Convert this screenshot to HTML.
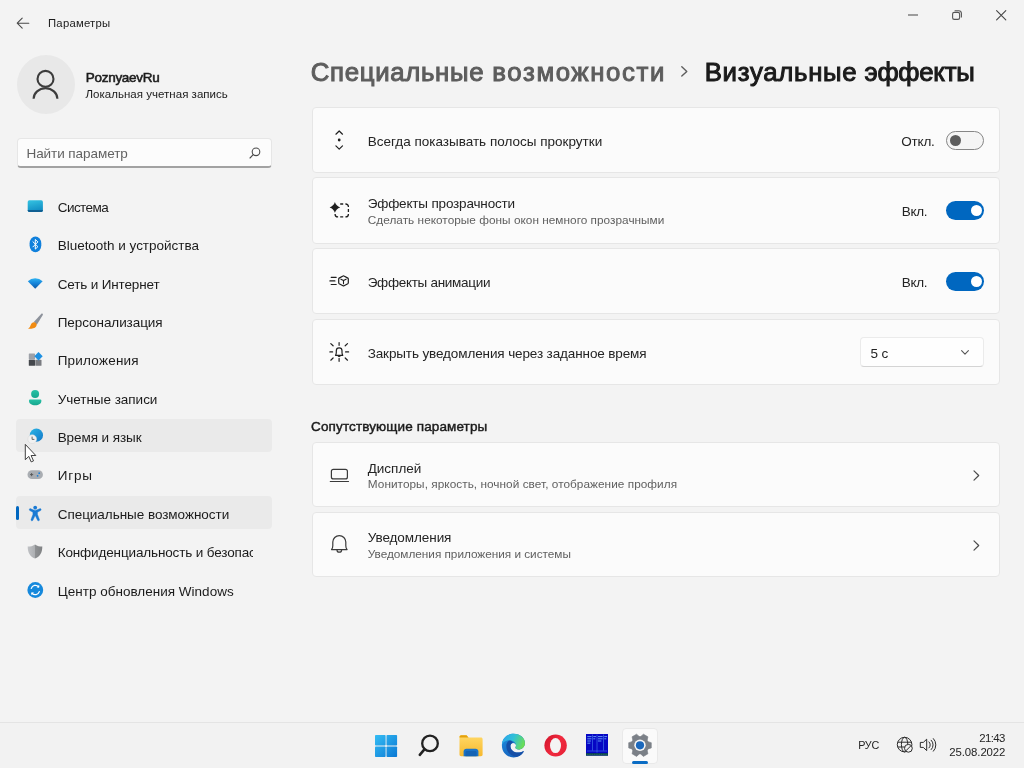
<!DOCTYPE html>
<html lang="ru">
<head>
<meta charset="utf-8">
<title>Параметры — Визуальные эффекты</title>
<style>
*{box-sizing:border-box;margin:0;padding:0}
html,body{width:1024px;height:768px;overflow:hidden}
body{position:relative;background:#f3f3f3;font-family:"Liberation Sans",sans-serif;color:#1b1b1b}
.t{position:absolute;white-space:nowrap;line-height:1;display:block}
.abs{position:absolute}
svg{position:absolute;overflow:visible}
h1,h2{font-weight:400;font-size:inherit}
#app{position:absolute;left:0;top:0;width:1024px;height:768px;will-change:transform}
.card{position:absolute;left:312px;width:688px;background:#fbfbfb;border:1px solid #e6e6e6;border-radius:4px}
.navsel{position:absolute;left:16px;width:256px;height:33px;border-radius:4px;background:#eaeaea}
.tog{position:absolute;left:946px;width:38px;height:19px;border-radius:10px}
.tog.off{border:1px solid #868686;background:#f5f5f5}
.tog.on{background:#0067c0}
.tog i{position:absolute;top:50%;width:11px;height:11px;margin-top:-5.5px;border-radius:50%}
.tog.off i{left:2.500px;background:#5d5d5d}
.tog.on i{right:2.500px;background:#fff}
</style>
</head>
<body>
<div id="app">

<!-- title bar -->
<header>
<svg style="left:16px;top:17px" width="14" height="12" viewBox="0 0 14 12" fill="none" stroke="#4a4a4a" stroke-width="1.1" stroke-linecap="round" stroke-linejoin="round"><path d="M12.8 6.2H1.4M6.2 1.2L1.2 6.2l5 5"/></svg>
<span class="t" id="ttl" style="left:48.0px;top:18px;font-size:11.3px;color:#1b1b1b;letter-spacing:0.246px;">Параметры</span>
<svg style="left:908px;top:14px" width="10" height="2" viewBox="0 0 10 2"><path d="M0 1h10" stroke="#555" stroke-width="1.1"/></svg>
<svg style="left:952px;top:10px" width="10" height="10" viewBox="0 0 10 10" fill="none" stroke="#555" stroke-width="1.100"><rect x="0.600" y="2.400" width="7" height="7" rx="1.700"/><path d="M2.600 0.700h4a2.800 2.800 0 0 1 2.800 2.800v4"/></svg>
<svg style="left:996px;top:10px" width="10" height="10" viewBox="0 0 10 10" stroke="#444" stroke-width="1.100" stroke-linecap="round"><path d="M0.600 0.600l9.200 9.200M9.800 0.600L0.600 9.800"/></svg>
</header>

<!-- sidebar -->
<aside>
<div class="abs" style="left:17px;top:55px;width:58px;height:59px;border-radius:50%;background:#e8e8e8"></div>
<svg style="left:0;top:0" width="90" height="120" viewBox="0 0 90 120" fill="none" stroke="#3c3c3c" stroke-width="2.100"><circle cx="45.500" cy="78.900" r="8"/><path d="M33.600 98.800a11.900 10.500 0 0 1 23.800 0"/></svg>
<span class="t" id="uname" style="left:85.8px;top:71px;font-size:13.5px;color:#1b1b1b;-webkit-text-stroke:0.55px #1b1b1b;letter-spacing:-0.295px;">PoznyaevRu</span>
<span class="t" id="usub" style="left:85.5px;top:89px;font-size:11.5px;color:#1b1b1b;letter-spacing:0.024px;">Локальная учетная запись</span>
<div class="abs" style="left:17px;top:138px;width:255px;height:30px;background:#fcfcfc;border:1px solid #e6e6e6;border-bottom:2px solid #a2a2a2;border-radius:4px"></div>
<span class="t" id="srch" style="left:26.5px;top:147px;font-size:13.5px;color:#626262;letter-spacing:-0.067px;">Найти параметр</span>
<svg style="left:249px;top:147px" width="12" height="12" viewBox="0 0 12 12" fill="none" stroke="#4a4a4a" stroke-width="1.1" stroke-linecap="round"><circle cx="7" cy="4.8" r="3.8"/><path d="M4.200 7.700L1 11"/></svg>

<nav>
<div class="navsel" style="top:419px;background:#eaeaea"></div>
<div class="navsel" style="top:496px;background:#eaeaea"></div>
<div class="abs" style="left:16px;top:506px;width:3px;height:14px;border-radius:2px;background:#0067c0"></div>
<span class="t" id="nav0" style="left:57.7px;top:201px;font-size:13.5px;color:#1b1b1b;letter-spacing:-0.547px;">Система</span><span class="t" id="nav1" style="left:57.7px;top:239px;font-size:13.5px;color:#1b1b1b;letter-spacing:-0.018px;">Bluetooth и устройства</span><span class="t" id="nav2" style="left:57.7px;top:278px;font-size:13.5px;color:#1b1b1b;letter-spacing:-0.150px;">Сеть и Интернет</span><span class="t" id="nav3" style="left:57.7px;top:316px;font-size:13.5px;color:#1b1b1b;letter-spacing:-0.065px;">Персонализация</span><span class="t" id="nav4" style="left:57.7px;top:354px;font-size:13.5px;color:#1b1b1b;letter-spacing:0.218px;">Приложения</span><span class="t" id="nav5" style="left:57.7px;top:393px;font-size:13.5px;color:#1b1b1b;letter-spacing:-0.031px;">Учетные записи</span><span class="t" id="nav6" style="left:57.7px;top:431px;font-size:13.5px;color:#1b1b1b;letter-spacing:-0.076px;">Время и язык</span><span class="t" id="nav7" style="left:57.7px;top:469px;font-size:13.5px;color:#1b1b1b;letter-spacing:0.850px;">Игры</span><span class="t" id="nav8" style="left:57.7px;top:508px;font-size:13.5px;color:#1b1b1b;letter-spacing:-0.039px;">Специальные возможности</span><span class="t" id="nav9" style="left:57.7px;top:546px;font-size:13.5px;color:#1b1b1b;letter-spacing:-0.140px;width:195.6px;overflow:hidden;height:18px;">Конфиденциальность и безопасность</span><span class="t" id="nav10" style="left:57.7px;top:585px;font-size:13.5px;color:#1b1b1b;letter-spacing:0.014px;">Центр обновления Windows</span>
<svg style="left:0;top:0" width="60" height="620" viewBox="0 0 60 620">
<defs>
<linearGradient id="gsys" x1="0" y1="0" x2="0.3" y2="1"><stop offset="0" stop-color="#35c4e2"/><stop offset="1" stop-color="#128ec4"/></linearGradient>
<linearGradient id="gwifi" x1="0" y1="0" x2="0" y2="1"><stop offset="0" stop-color="#2fb4f2"/><stop offset="0.45" stop-color="#1787dc"/><stop offset="1" stop-color="#0c58a6"/></linearGradient>
<linearGradient id="gacc" x1="0" y1="0" x2="0" y2="1"><stop offset="0" stop-color="#27c2a6"/><stop offset="1" stop-color="#17a68e"/></linearGradient>
<linearGradient id="gshield" x1="0" y1="0" x2="1" y2="0"><stop offset="0" stop-color="#c0c2c5"/><stop offset="0.5" stop-color="#acaeb1"/><stop offset="0.5" stop-color="#8f9193"/><stop offset="1" stop-color="#808284"/></linearGradient>
<linearGradient id="gglobe" x1="0" y1="0" x2="1" y2="1"><stop offset="0" stop-color="#2bb6e6"/><stop offset="1" stop-color="#1277c8"/></linearGradient>
</defs>
<!-- system -->
<rect x="27.7" y="200.300" width="15.2" height="11.6" rx="1.6" fill="url(#gsys)"/>
<path d="M27.700 209.900h15.200v0.400a1.600 1.600 0 0 1-1.600 1.600h-12a1.600 1.600 0 0 1-1.600-1.600z" fill="#0f5f92"/>
<!-- bluetooth -->
<rect x="29.600" y="236.400" width="11.700" height="15.800" rx="5.850" ry="6.900" fill="#1080dc"/>
<path d="M32.900 241.700l5 5-2.600 2.400v-9.600l2.600 2.400-5 5" fill="none" stroke="#fff" stroke-width="1" stroke-linejoin="round" stroke-linecap="round"/>
<!-- wifi -->
<path d="M35.200 288.700L27.800 281.200a10.600 10.600 0 0 1 14.800 0z" fill="url(#gwifi)"/>
<!-- personalization brush -->
<path d="M41.400 313.800c0.700-0.600 1.900 0.300 1.400 1.200l-6 9.700-3-2.600z" fill="#8d929b"/>
<path d="M33.600 322.300c1.500-0.300 3.300 1.200 3.100 2.800-0.300 2.400-2.700 3.500-5.300 3.700-1.400 0.100-2.700 0-3.600-0.200 1.300-0.600 2-1.400 2.500-2.700 0.600-1.700 1.500-3.200 3.300-3.600z" fill="#f28c12"/>
<!-- apps -->
<rect x="28.800" y="353.400" width="6.200" height="6.200" rx="0.600" fill="#9da1a8"/>
<rect x="28.800" y="359.800" width="6.200" height="6" rx="0.600" fill="#44474c"/>
<rect x="35.300" y="359.800" width="6.200" height="6" rx="0.600" fill="#7a7c81"/>
<path d="M38.500 352l4.200 4.300-4.200 4.300-4.200-4.300z" fill="#1e90e2"/>
<!-- accounts -->
<circle cx="35.100" cy="394" r="4" fill="url(#gacc)"/>
<path d="M29 400.700c0-0.700 0.500-1.200 1.200-1.200h10c0.700 0 1.200 0.500 1.200 1.200 0 2.800-2.600 4.500-6.200 4.500s-6.200-1.700-6.200-4.500z" fill="url(#gacc)"/>
<!-- time & language -->
<circle cx="36.400" cy="435.200" r="6.600" fill="url(#gglobe)"/>
<circle cx="32.200" cy="439.100" r="4.400" fill="#f1f1f1" stroke="#d4d4d4" stroke-width="0.500"/>
<path d="M32.100 437v2.400h1.900" fill="none" stroke="#555" stroke-width="0.900" stroke-linecap="round"/>
<!-- gaming -->
<rect x="27.500" y="470.200" width="15.400" height="8.900" rx="4.450" fill="#a9adb2"/>
<path d="M31.600 473v3.200M30 474.600h3.200" stroke="#555" stroke-width="0.900"/>
<circle cx="39.200" cy="473.200" r="0.900" fill="#1e7fd6"/><circle cx="37.600" cy="475.800" r="0.900" fill="#1e7fd6"/>
<!-- accessibility -->
<circle cx="35.200" cy="507.600" r="1.900" fill="#1a7ad4"/>
<path d="M29.300 509.200c0.300-0.600 0.900-0.700 1.400-0.500l3.100 1.400c0.900 0.400 1.900 0.400 2.800 0l3.100-1.400c0.500-0.200 1.100-0.100 1.400 0.500 0.200 0.500 0 1.100-0.500 1.400l-3.100 1.600v2.300l1.900 5c0.200 0.600 0 1.100-0.600 1.300-0.500 0.200-1.100-0.100-1.300-0.600l-2.300-4.800-2.300 4.800c-0.200 0.500-0.800 0.800-1.300 0.600-0.600-0.200-0.800-0.700-0.600-1.300l1.900-5v-2.300l-3.100-1.600c-0.500-0.300-0.700-0.900-0.500-1.400z" fill="#1a7ad4" stroke="#1a7ad4" stroke-width="0.4" stroke-linejoin="round"/>
<!-- privacy shield -->
<path d="M35 544.400c2.400 1.500 4.600 2.100 7.300 2.200 0 6.200-2.200 10-7.300 12-5.100-2-7.300-5.800-7.300-12 2.700-0.100 4.900-0.700 7.300-2.200z" fill="url(#gshield)"/>
<!-- update -->
<circle cx="35.300" cy="590" r="7.900" fill="#1689dc"/>
<path d="M31.300 588.400a4.300 4.300 0 0 1 7.300-1.600M39.300 591.600a4.300 4.300 0 0 1-7.300 1.600" fill="none" stroke="#fff" stroke-width="1.300" stroke-linecap="round"/>
<path d="M39.200 584.800v2.600h-2.600zM31.400 595.200v-2.600h2.600z" fill="#fff"/>
<!-- cursor -->
<path d="M25.300 444.400v15.300l3.500-3.300 2.400 5.500 2.300-1-2.400-5.400h4.700z" fill="#fff" stroke="#2b2b2b" stroke-width="0.900" stroke-linejoin="round"/>
</svg>
</nav>
</aside>

<!-- main -->
<main>
<h1><span class="t" id="h1a" style="left:310.8px;top:60px;font-size:25.8px;color:#5d5d5d;-webkit-text-stroke:1.0px #5d5d5d;letter-spacing:0.664px;">Специальные</span> <span class="t" id="h1a2" style="left:492.3px;top:60px;font-size:25.8px;color:#5d5d5d;-webkit-text-stroke:1.0px #5d5d5d;letter-spacing:1.594px;">возможности</span> <span class="t" id="h1b" style="left:704.7px;top:60px;font-size:25.8px;color:#1b1b1b;-webkit-text-stroke:1.0px #1b1b1b;letter-spacing:0.695px;">Визуальные</span> <span class="t" id="h1b2" style="left:864.5px;top:60px;font-size:25.8px;color:#1b1b1b;-webkit-text-stroke:1.0px #1b1b1b;letter-spacing:-0.271px;">эффекты</span></h1>
<svg style="left:680.7px;top:66.3px" width="7" height="11" viewBox="0 0 7 11" fill="none" stroke="#5d5d5d" stroke-width="1.4" stroke-linecap="round" stroke-linejoin="round"><path d="M0.800 0.800l5 4.600-5 4.600"/></svg>

<section>
<div class="card" style="top:107px;height:66px"></div>
<div class="card" style="top:177px;height:67px"></div>
<div class="card" style="top:248px;height:66px"></div>
<div class="card" style="top:319px;height:66px"></div>
<span class="t" id="c1" style="left:367.7px;top:135px;font-size:13.5px;color:#242424;letter-spacing:0.002px;">Всегда показывать полосы прокрутки</span><span class="t" id="c1v" style="left:901.3px;top:135px;font-size:13.5px;color:#242424;letter-spacing:-0.217px;">Откл.</span><div class="tog off" style="top:130.500px"><i></i></div>
<span class="t" id="c2" style="left:367.7px;top:197px;font-size:13.5px;color:#242424;letter-spacing:-0.172px;">Эффекты прозрачности</span><span class="t" id="c2s" style="left:367.8px;top:215px;font-size:11.8px;color:#5f5f5f;letter-spacing:0.026px;">Сделать некоторые фоны окон немного прозрачными</span><span class="t" id="c2v" style="left:901.7px;top:205px;font-size:13.5px;color:#242424;letter-spacing:-0.269px;">Вкл.</span><div class="tog on" style="top:201px"><i></i></div>
<span class="t" id="c3" style="left:367.7px;top:276px;font-size:13.5px;color:#242424;letter-spacing:-0.291px;">Эффекты анимации</span><span class="t" id="c3v" style="left:901.7px;top:276px;font-size:13.5px;color:#242424;letter-spacing:-0.269px;">Вкл.</span><div class="tog on" style="top:272px"><i></i></div>
<span class="t" id="c4" style="left:367.7px;top:347px;font-size:13.5px;color:#242424;letter-spacing:-0.120px;">Закрыть уведомления через заданное время</span>
<div class="abs" style="left:860px;top:337px;width:124px;height:30px;background:#fefefe;border:1px solid #ebebeb;border-bottom-color:#d4d4d4;border-radius:4px"></div>
<span class="t" id="c4v" style="left:870.5px;top:347px;font-size:13.5px;color:#242424;letter-spacing:-0.128px;">5 с</span>
<svg style="left:961px;top:350px" width="8" height="5" viewBox="0 0 8 5" fill="none" stroke="#555" stroke-width="1.1" stroke-linecap="round" stroke-linejoin="round"><path d="M0.600 0.700l3.400 3.400 3.400-3.400"/></svg>
<svg style="left:320px;top:120px" width="40" height="250" viewBox="320 120 40 250" fill="none" stroke="#1f1f1f" stroke-width="1.200" stroke-linecap="round" stroke-linejoin="round">
<!-- scrollbars -->
<path d="M335.900 134.200l3.300-3.200 3.300 3.200M335.900 145.900l3.300 3.200 3.300-3.200"/>
<circle cx="339.200" cy="140" r="1.400" fill="#1f1f1f" stroke="none"/>
<!-- transparency -->
<path d="M334.90 202.10C335.80 204.90 337.40 206.50 340.20 207.40C337.40 208.30 335.80 209.90 334.90 212.70C334.00 209.90 332.40 208.30 329.60 207.40C332.40 206.50 334.00 204.90 334.90 202.10z" fill="#1f1f1f" stroke="none"/>
<path d="M340.200 204h3M345.400 204h0.300a2.700 2.700 0 0 1 2.700 2.700v0.300M348.400 209.100v2.900M348.400 213.900v0.300a2.700 2.700 0 0 1-2.700 2.700h-0.300M343.200 216.900h-3M338.100 216.900h-0.300a2.700 2.700 0 0 1-2.700-2.700v-0.300" stroke-width="1.300" stroke-linecap="butt"/>
<!-- animation -->
<path d="M331.200 277.300h5M329.900 280.900h5M331.200 284.500h5"/>
<path d="M343 276l-3.800 2.100c-0.300 0.200-0.500 0.500-0.500 0.900v3.800c0 0.400 0.200 0.700 0.500 0.900l3.800 2.100c0.300 0.200 0.700 0.200 1 0l3.800-2.100c0.300-0.200 0.500-0.500 0.500-0.900v-3.800c0-0.400-0.200-0.700-0.500-0.900l-3.800-2.100c-0.300-0.200-0.700-0.200-1 0z"/>
<path d="M340.900 279.200l2.600 1.400 2.600-1.400M343.500 280.600v3.200" stroke-width="1.100"/>
<!-- notifications timer -->
<path d="M339.100 342.600v2.700M339.100 358.400v2.900M329.900 351.900h2.700M345.600 351.900h3M330.800 343.600l2.300 2.200M347.500 343.600l-2.300 2.200M330.800 360.200l2.300-2.200M347.500 360.200l-2.300-2.200"/>
<path d="M335.500 355.300c0.700-0.800 0.800-1.500 0.800-2.700v-1.900a2.850 2.850 0 0 1 5.700 0v1.900c0 1.200 0.100 1.900 0.800 2.700z"/>
<path d="M338 355.600a1.200 1.200 0 0 0 2.300 0" fill="#1f1f1f"/>
</svg>
</section>

<section>
<h2><span class="t" id="rel" style="left:311.1px;top:420px;font-size:13.5px;color:#1b1b1b;-webkit-text-stroke:0.45px #1b1b1b;letter-spacing:0.120px;">Сопутствующие параметры</span></h2>
<div class="card" style="top:442px;height:65px"></div>
<div class="card" style="top:512px;height:65px"></div>
<span class="t" id="c5" style="left:367.7px;top:462px;font-size:13.5px;color:#242424;letter-spacing:-0.010px;">Дисплей</span><span class="t" id="c5s" style="left:367.8px;top:479px;font-size:11.8px;color:#5f5f5f;letter-spacing:0.043px;">Мониторы, яркость, ночной свет, отображение профиля</span><span class="t" id="c6" style="left:367.7px;top:531px;font-size:13.5px;color:#242424;letter-spacing:-0.067px;">Уведомления</span><span class="t" id="c6s" style="left:367.8px;top:549px;font-size:11.8px;color:#5f5f5f;letter-spacing:-0.027px;">Уведомления приложения и системы</span>
<svg style="left:973px;top:470px" width="7" height="11" viewBox="0 0 7 11" fill="none" stroke="#4a4a4a" stroke-width="1.2" stroke-linecap="round" stroke-linejoin="round"><path d="M1 0.800l4.700 4.700L1 10.200"/></svg>
<svg style="left:973px;top:540px" width="7" height="11" viewBox="0 0 7 11" fill="none" stroke="#4a4a4a" stroke-width="1.2" stroke-linecap="round" stroke-linejoin="round"><path d="M1 0.800l4.700 4.700L1 10.200"/></svg>
<svg style="left:320px;top:456px" width="40" height="110" viewBox="320 456 40 110" fill="none" stroke="#3a3a3a" stroke-width="1.200" stroke-linecap="round" stroke-linejoin="round">
<rect x="331.400" y="469.300" width="16" height="9.600" rx="2"/>
<path d="M330.300 481.500h18.200"/>
<path d="M331.500 549.600c0.900-1 1.300-2.200 1.300-3.800v-3.700a6.500 6.500 0 0 1 13 0v3.700c0 1.600 0.400 2.800 1.300 3.800z"/>
<path d="M337 549.900a2.300 2.300 0 0 0 4.600 0"/>
</svg>
</section>
</main>

<!-- taskbar -->
<footer>
<div class="abs" style="left:0;top:722px;width:1024px;height:46px;background:#f2f2f2;border-top:1px solid #e4e4e4"></div>
<div class="abs" style="left:622px;top:728px;width:36px;height:36px;border-radius:4px;background:#fafafa;border:1px solid #e9e9e9"></div>
<div class="abs" style="left:632px;top:761px;width:16px;height:3px;border-radius:2px;background:#0a6cc4"></div>
<svg style="left:360px;top:724px" width="664" height="44" viewBox="360 724 664 44">
<defs>
<linearGradient id="gwin" gradientUnits="userSpaceOnUse" x1="375" y1="735" x2="397" y2="757"><stop offset="0" stop-color="#35bdf4"/><stop offset="1" stop-color="#0a78d4"/></linearGradient>
<linearGradient id="gfold" x1="0" y1="0" x2="0" y2="1"><stop offset="0" stop-color="#ffd866"/><stop offset="1" stop-color="#f7b92e"/></linearGradient>
<linearGradient id="gedge1" x1="0" y1="0" x2="0.6" y2="1"><stop offset="0" stop-color="#1f8fe0"/><stop offset="1" stop-color="#1560bc"/></linearGradient>
<linearGradient id="gedge2" x1="0" y1="0.3" x2="1" y2="0.6"><stop offset="0" stop-color="#2ea6ea"/><stop offset="0.45" stop-color="#30c0d8"/><stop offset="1" stop-color="#6fe04e"/></linearGradient>
<linearGradient id="gop" x1="0" y1="0.2" x2="1" y2="0.800"><stop offset="0" stop-color="#d4142c"/><stop offset="0.5" stop-color="#f02a3e"/><stop offset="1" stop-color="#e82238"/></linearGradient>
</defs>
<!-- start -->
<g fill="url(#gwin)"><rect x="375" y="735" width="10.600" height="10.600" rx="0.800"/><rect x="386.500" y="735" width="10.600" height="10.600" rx="0.800"/><rect x="375" y="746.500" width="10.600" height="10.600" rx="0.800"/><rect x="386.500" y="746.500" width="10.600" height="10.600" rx="0.800"/></g>
<!-- search -->
<circle cx="430" cy="743.400" r="7.800" fill="none" stroke="#222" stroke-width="2.300"/>
<path d="M424.400 749.400l-4.600 5.400" stroke="#222" stroke-width="2.600" stroke-linecap="round"/>
<!-- explorer -->
<path d="M459.500 737c0-1 0.700-1.700 1.700-1.700h5.300l2 2.200h12.400c1 0 1.700 0.700 1.700 1.700v15.300c0 1-0.700 1.700-1.700 1.700h-19.700c-1 0-1.700-0.700-1.700-1.700z" fill="url(#gfold)"/>
<path d="M459.500 737c0-1 0.700-1.700 1.700-1.700h5.300l2 2.200h-9z" fill="#e4a10c"/>
<path d="M463.600 756.200v-4.600c0-1.600 1.200-2.800 2.800-2.800h9.200c1.600 0 2.800 1.200 2.800 2.800v4.600z" fill="#1a73c8"/>
<path d="M465.400 756.200v-3.400c0-1 0.700-1.700 1.700-1.700h7.800c1 0 1.700 0.700 1.700 1.700v3.400z" fill="#1463b4"/>
<!-- edge -->
<g transform="translate(497 729)">
<path d="M4.900 16.500C4.900 9.500 10 4.800 16.600 4.800c6.900 0 11.300 4.400 11.300 9.100 0 4.100-2.900 6.500-6.400 6.500-2 0-3.100-0.800-3.100-1.800 0-0.700 0.600-1.100 0.600-2.200 0-1.500-1.400-2.500-3-2.500s-2.600 1.400-2.600 3.100c0 3.500 3.100 6.600 7.100 6.600 2.500 0 4.500-0.700 5.700-1.300 0.400-0.200 0.700 0.200 0.500 0.500-2.200 3.700-5.900 5.600-10.100 5.600C10 28.400 4.900 23.400 4.900 16.500z" fill="url(#gedge1)"/>
<path d="M12.600 11.200c-2.600 1.300-3.300 3.800-3.300 5.800 0 5.500 4.200 10.500 10.700 10.700 2.700-0.600 5-2.200 6.700-4.900 0.200-0.300-0.100-0.700-0.500-0.500-1.200 0.600-3.200 1.300-5.700 1.300-4 0-7.100-3.100-7.100-6.600 0-1.700 1-3.100 2.600-3.100-1-1.900-2.200-2.600-3.400-2.700z" fill="#164fa6"/>
<path d="M4.900 16.500C4.900 9.500 10 4.800 16.600 4.800c6.900 0 11.300 4.400 11.300 9.100 0 4.100-2.900 6.500-6.400 6.500-2 0-3.100-0.800-3.100-1.800 0-0.700 0.600-1.100 0.600-2.200 0-2.900-3-5.200-6.400-5.200-4.100 0-7.400 2.300-7.700 5.300z" fill="url(#gedge2)"/>
</g>
<!-- opera -->
<ellipse cx="555.600" cy="745.500" rx="11.200" ry="11.100" fill="url(#gop)"/>
<ellipse cx="555.500" cy="745.600" rx="5.500" ry="7.500" fill="#f4f4f4"/>
<!-- far -->
<rect x="586" y="734" width="22" height="21.600" fill="#0606c4"/>
<rect x="586" y="753.200" width="22" height="2.400" fill="#0b4a4a"/>
<path d="M592.500 734.600v16M597 734.600v18M603.500 734.600v16M587 751h20" stroke="#3f6fe8" stroke-width="0.700"/>
<path d="M587.300 736.600h4.200M587.300 738.800h4.200M587.300 741h3.600M587.300 743.200h3M593.300 736.600h2.800M593.300 738.800h2M598 736.600h4.600M598 738.800h4.600M598 741h3.400M604.300 736.600h2.800M604.300 738.800h2" stroke="#6aa6f8" stroke-width="0.900"/>
<path d="M587 754.400h20" stroke="#2a6a5a" stroke-width="0.800" stroke-dasharray="1.500 0.800"/>
<!-- settings gear -->
<g transform="translate(640 745.300) rotate(90)">
<g fill="#7b8087" stroke="#7b8087" stroke-width="0.600" stroke-linejoin="round"><path d="M-2.600-11.300h5.200l1.300 4h-7.800z" transform="rotate(0)"/><path d="M-2.600-11.300h5.200l1.300 4h-7.800z" transform="rotate(60)"/><path d="M-2.600-11.300h5.200l1.300 4h-7.800z" transform="rotate(120)"/><path d="M-2.600-11.300h5.200l1.300 4h-7.800z" transform="rotate(180)"/><path d="M-2.600-11.300h5.200l1.300 4h-7.800z" transform="rotate(240)"/><path d="M-2.600-11.300h5.200l1.300 4h-7.800z" transform="rotate(300)"/></g>
<circle r="9" fill="#7b8087"/>
<circle r="5.700" fill="#f7f7f7"/>
<circle r="4.100" fill="#1b68bc"/>
</g>
<!-- tray: network globe -->
<g fill="none" stroke="#2b2b2b" stroke-width="1">
<circle cx="904.600" cy="744.600" r="7.300"/>
<ellipse cx="904.600" cy="744.600" rx="3.200" ry="7.300"/>
<path d="M897.800 742.200h13.600M897.800 747h8"/>
<circle cx="908.400" cy="748.300" r="3.900" fill="#f2f2f2"/>
<path d="M905.800 750.900l5.200-5.200"/>
</g>
<!-- tray: speaker -->
<g fill="none" stroke="#2b2b2b" stroke-width="1" stroke-linecap="round" stroke-linejoin="round">
<path d="M920.700 742.400h2.600l3.400-3.200v11.400l-3.400-3.200h-2.600z"/>
<path d="M929 741.900a4 4 0 0 1 0 6M931.200 740.200a6.500 6.500 0 0 1 0 9.400M933.400 738.600a9 9 0 0 1 0 12.600"/>
</g>
</svg>
<span class="t" id="lang" style="left:858.2px;top:740px;font-size:10.8px;color:#242424;letter-spacing:-0.309px;">РУС</span><span class="t" id="time" style="left:979.3px;top:733px;font-size:11.4px;color:#242424;letter-spacing:-0.637px;">21:43</span><span class="t" id="date" style="left:949.3px;top:747px;font-size:11.4px;color:#242424;letter-spacing:-0.098px;">25.08.2022</span>
</footer>

</div>
</body>
</html>
